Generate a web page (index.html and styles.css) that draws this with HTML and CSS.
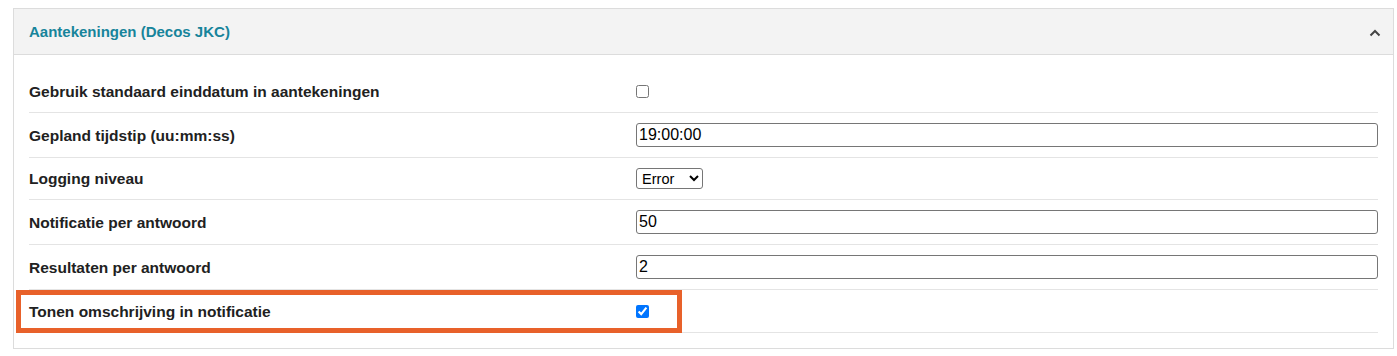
FILE: index.html
```html
<!DOCTYPE html>
<html lang="nl">
<head>
  <meta charset="UTF-8" />
  <meta name="viewport" content="width=device-width, initial-scale=1" />
  <title>Aantekeningen (Decos JKC)</title>
  <link rel="stylesheet" href="styles.css">
</head>
<body>
  <div class="paneel">
    <div class="paneel-kop">
      <span class="paneel-titel">Aantekeningen (Decos JKC)</span>
      <svg class="chevron" width="12" height="8" viewBox="0 0 12 8">
        <polyline points="1.5,6.5 6,2 10.5,6.5" fill="none" stroke="#444" stroke-width="2" />
      </svg>
    </div>
    <div class="paneel-body">
      <div class="rij">
        <label class="rij-label">Gebruik standaard einddatum in aantekeningen</label>
        <div class="rij-veld"><input type="checkbox" class="vinkje"></div>
      </div>
      <div class="rij">
        <label class="rij-label">Gepland tijdstip (uu:mm:ss)</label>
        <div class="rij-veld"><input type="text" class="tekstveld" value="19:00:00"></div>
      </div>
      <div class="rij">
        <label class="rij-label">Logging niveau</label>
        <div class="rij-veld">
          <select class="keuze">
            <option>Debug</option>
            <option>Info</option>
            <option selected>Error</option>
          </select>
        </div>
      </div>
      <div class="rij">
        <label class="rij-label">Notificatie per antwoord</label>
        <div class="rij-veld"><input type="text" class="tekstveld" value="50"></div>
      </div>
      <div class="rij">
        <label class="rij-label">Resultaten per antwoord</label>
        <div class="rij-veld"><input type="text" class="tekstveld" value="2"></div>
      </div>
      <div class="rij">
        <div class="markering"></div>
        <label class="rij-label">Tonen omschrijving in notificatie</label>
        <div class="rij-veld"><input type="checkbox" class="vinkje" checked></div>
      </div>
    </div>
  </div>
</body>
</html>
```

FILE: styles.css
```css
body {
  margin: 0;
  padding: 8px 3px 0 13px;
  font-family: "Liberation Sans", Arial, sans-serif;
  font-size: 14px;
  color: #212121;
  background: #fff;
}

.paneel {
  border: 1px solid #dcdcdc;
}

.paneel-kop {
  display: flex;
  justify-content: space-between;
  align-items: center;
  padding: 12px 15px;
  line-height: 21px;
  background: #f3f3f3;
  border-bottom: 1px solid #dcdcdc;
}

.paneel-titel {
  color: #17849b;
  font-weight: bold;
  font-size: 15px;
}

.chevron {
  margin-right: -3px;
  margin-top: 2px;
}

.paneel-body {
  padding: 15px;
}

.rij {
  position: relative;
  display: grid;
  grid-template-columns: 45% 1fr;
  align-items: center;
  padding: 10px 0;
  border-bottom: 1px solid #e4e4e4;
}

.rij-label {
  font-weight: bold;
  font-size: 15.5px;
  line-height: 21px;
}

.rij-veld {
  display: flex;
  align-items: center;
}

.vinkje {
  width: 13px;
  height: 13px;
  margin: 5px 0 4px 0;
}

.tekstveld {
  width: 100%;
  box-sizing: border-box;
  height: 24px;
  padding: 2px 2px;
  border: 1px solid #767676;
  border-radius: 3px;
  font-family: "Liberation Sans", Arial, sans-serif;
  font-size: 16px;
  line-height: 18px;
  color: #000;
}

.keuze {
  height: 21px;
  font-family: "Liberation Sans", Arial, sans-serif;
  font-size: 14.5px;
  color: #000;
  border: 1px solid #767676;
  border-radius: 3px;
  background: #fff;
  padding: 0 1px;
}

.markering {
  position: absolute;
  left: -13px;
  top: 0;
  width: 666px;
  height: 43px;
  box-sizing: border-box;
  border: 5px solid #e8612a;
  pointer-events: none;
}
```
